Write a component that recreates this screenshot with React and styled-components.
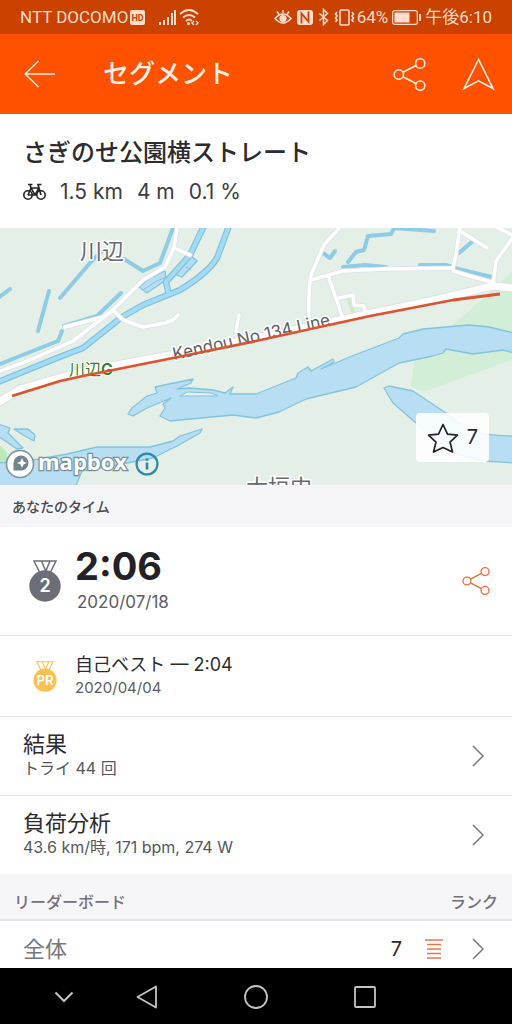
import React from 'react';
import styled, { createGlobalStyle } from 'styled-components';

const GlobalStyle = createGlobalStyle`
    * {
        box-sizing: border-box;
    }

    body {
        margin: 0;
        background: #fff;
        color: #2b2b30;
        font-family: Inter, 'Noto Sans CJK JP', sans-serif;
    }

    button {
        padding: 0;
        border: 0;
        background: none;
        color: inherit;
        font: inherit;
        cursor: pointer;
    }

    h1, h2, p {
        margin: 0;
    }

    svg {
        display: block;
        flex: none;
    }
`;

const Page = styled.div`
    display: flex;
    flex-direction: column;
    min-height: 100vh;
`;

const StatusBar = styled.div`
    display: flex;
    align-items: center;
    justify-content: space-between;
    height: 34px;
    padding: 0 20px;
    background: #ca4100;
    color: #ffdccb;
    font-family: Roboto, 'Noto Sans CJK JP', sans-serif;
    font-size: 17px;
    line-height: 24px;
    white-space: nowrap;
`;

const StatusGroup = styled.div`
    display: flex;
    align-items: center;
    gap: ${props => props.$gap}px;
`;

const AppBar = styled.header`
    display: flex;
    align-items: center;
    height: 80px;
    padding: 0 17px 0 24px;
    background: #ff5100;
    color: #fff0e6;
`;

const AppTitle = styled.h1`
    flex: 1;
    padding-left: 47px;
    font-size: 26px;
    line-height: 36px;
    font-weight: 500;
`;

const AppActions = styled.div`
    display: flex;
    align-items: center;
    gap: 36px;
`;

const SegmentHeader = styled.section`
    display: flex;
    flex-direction: column;
    gap: 4px;
    height: 114px;
    padding: 20px 23px 0;
`;

const SegmentName = styled.h2`
    font-size: 24px;
    line-height: 38px;
    font-weight: 500;
`;

const Stats = styled.div`
    display: flex;
    align-items: center;
    gap: 14px;
    font-size: 21px;
    line-height: 32px;
    color: #3c3c41;
`;

const MapArea = styled.section`
    position: relative;
    height: 257px;
    overflow: hidden;
    background: #e4efe7;
`;

const Attribution = styled.div`
    position: absolute;
    left: 5px;
    bottom: 6px;
    display: flex;
    align-items: center;
    gap: 4px;
`;

const StarButton = styled.button`
    position: absolute;
    right: 23px;
    bottom: 23px;
    display: flex;
    align-items: center;
    gap: 8px;
    height: 49px;
    padding: 0 11px;
    border-radius: 4px;
    background: rgba(255, 255, 255, 0.88);

    span {
        font-size: 20px;
        line-height: 28px;
        padding-bottom: 2px;
    }
`;

const SectionBar = styled.div`
    display: flex;
    align-items: center;
    justify-content: space-between;
    height: ${props => (props.$ruled ? 47 : 42)}px;
    padding: ${props => (props.$ruled ? '8px 14px 0' : '0 12px')};
    border-bottom: ${props => (props.$ruled ? '2px solid #e4e4e6' : '0')};
    background: #f6f6f9;
    color: ${props => (props.$ruled ? '#717177' : '#48484d')};
    font-size: ${props => (props.$ruled ? 16 : 14)}px;
    font-weight: 500;
`;

const Effort = styled.section`
    display: flex;
    align-items: center;
    height: ${props => props.$height}px;
    padding: 0 22px 0 29px;
    border-bottom: 1px solid #e6e6e8;
`;

const MedalSlot = styled.div`
    display: flex;
    justify-content: center;
    width: 32px;
`;

const EffortText = styled.div`
    flex: 1;
    padding-left: 14px;
`;

const EffortTime = styled.p`
    padding-bottom: 2px;
    font-size: 38px;
    line-height: 46px;
    font-weight: 700;
    color: #222226;
`;

const BestTime = styled.p`
    font-size: 18px;
    line-height: 24px;
`;

const DateText = styled.p`
    padding-left: ${props => (props.$large ? 2 : 0)}px;
    padding-bottom: ${props => (props.$large ? 6 : 0)}px;
    font-size: ${props => (props.$large ? 17 : 15)}px;
    line-height: 22px;
    color: #5c5c62;
`;

const ShareButton = styled.button`
    && {
        color: #ef6a35;
    }
`;

const LinkRow = styled.a`
    display: flex;
    align-items: center;
    justify-content: space-between;
    height: ${props => props.$height}px;
    padding: 0 28px 0 23px;
    border-bottom: ${props => (props.$last ? '0' : '1px solid #e6e6e8')};
    color: inherit;
    text-decoration: none;
`;

const RowText = styled.div`
    padding-bottom: 3px;
`;

const RowTitle = styled.p`
    font-size: 22px;
    line-height: 26px;
    color: ${props => (props.$muted ? '#77777c' : '#2b2b30')};
`;

const RowDetail = styled.p`
    font-size: 16px;
    line-height: 22px;
    color: #56565b;
`;

const Rank = styled.div`
    display: flex;
    align-items: center;
    font-size: 20px;

    svg {
        margin-left: 23px;
    }

    svg + svg {
        margin-left: 29px;
    }
`;

const Leaderboard = styled.section`
    padding-top: 8px;
    height: 47px;
    overflow: hidden;
`;

const NavBar = styled.nav`
    display: grid;
    grid-template-columns: 128px 38px 1fr 38px 128px;
    align-items: center;
    justify-items: center;
    flex: 1;
    min-height: 57px;
    background: #000;
    color: #c4c4c4;
`;

const ShareIcon = ({ size }) => (
    <svg width={size} height={size} viewBox="0 0 34 34" fill="none" stroke="currentColor" strokeWidth="1.6">
        <circle cx="6" cy="17" r="4.8" />
        <circle cx="28" cy="5.6" r="4.8" />
        <circle cx="28" cy="28.4" r="4.8" />
        <path d="M10.2 14.7l13.5-7M10.2 19.3l13.5 7" />
    </svg>
);

const Chevron = () => (
    <svg width="12" height="22" viewBox="0 0 12 22" fill="none" stroke="#77777c" strokeWidth="1.5">
        <path d="M1 1l10 10L1 21" />
    </svg>
);

const BikeIcon = () => (
    <svg width="23" height="18" viewBox="0 0 23 18" fill="none" stroke="#222226" strokeWidth="1.6">
        <circle cx="5" cy="12" r="4.2" />
        <circle cx="18" cy="12" r="4.2" />
        <path d="M5 12L8 5h8M8 5l4 7H5M12 12l4-7M18 12L15 1.5h3.5M5 1.5h4.500M7 1.5L8 5" />
    </svg>
);

const Medal = ({ width, color, label }) => (
    <MedalSlot>
        <svg width={width} height={Math.round(width * 1.31)} viewBox="0 0 32 42">
            <path d="M5 1h22l-6.500 13h-9z" fill="#fff" stroke={color} strokeWidth="1.5" />
            <path d="M12.500 1l5 12M21 1l-5 12" fill="none" stroke={color} strokeWidth="1.5" />
            <circle cx="16" cy="26" r="15.700" fill={color} />
            <text x="16" y="32" fill="#fff" fontSize="18" fontWeight="600" textAnchor="middle">{label}</text>
        </svg>
    </MedalSlot>
);

const StatusIcons = () => (
    <svg width="82" height="18" viewBox="0 0 82 18" fill="none" stroke="currentColor" strokeWidth="1.6">
        <path d="M1 10.500q8-9 16 0q-8 9-16 0zM3 3.500l2 3M9 2v3M15 3.500l-2 3" />
        <circle cx="9" cy="10.500" r="2.800" fill="currentColor" />
        <rect x="23" y="2" width="16" height="15" rx="3" fill="currentColor" stroke="none" />
        <path d="M27.500 15.500V5.500l7 8V3.500" stroke="#ca4100" strokeWidth="1.8" />
        <path d="M45.500 5.500l8 7-4 4V1.500l4 4-8 7" strokeWidth="1.5" />
        <rect x="66" y="2" width="9" height="15" rx="1" />
        <path d="M63 4l-1.500 2 1.500 2-1.500 2 1.500 2-1.500 2M78 4l1.500 2-1.500 2 1.500 2-1.500 2 1.500 2" />
    </svg>
);

const SignalIcons = () => (
    <svg width="41" height="18" viewBox="0 0 41 18" fill="none" stroke="currentColor" strokeWidth="2">
        <path d="M2 17v-3M6 17v-5M10 17V9M14 17V5M17 17V2" />
        <path d="M22 6q9-8 18 0M25 9.500q6-5 12 0M28 13q3-3 6 0" strokeWidth="1.8" />
        <circle cx="30.500" cy="15.500" r="1.5" fill="currentColor" stroke="none" />
        <path d="M36 13l-2 2 2 2M38 13l2 2-2 2" strokeWidth="1.4" />
    </svg>
);

const WATERWAYS = [
    'M173 0L160 35L143 43L124 31',
    'M102 23L90 35L60 70',
    'M49 63L38 103',
    'M-2 70L10 61',
    'M121 65L97 88L64 98',
    'M62 103L58 113L20 128L-2 137',
    'M323 25L330 30L335 23',
    'M348 34L356 24L364 22L368 8L391 6L394 0L434 3',
    'M343 39L365 37L386 39',
    'M420 37L446 37L458 41L492 49',
    'M473 13L459 25',
];

const CANALS = [
    'M229 -2L217 30Q208 45 180 62L143 77L122 89L83 120L57 130L-2 154',
    'M204 -2L190 27L166 54L168 63',
];

const ROADS = [
    'M177 0L174 20L165 39L143 52L113 82L73 113L30 132L-2 144',
    'M174 20L190 27',
    'M113 82L123 92L143 99L165 95L173 92L178 87',
    'M65 99L103 89',
    'M239 87L236 103',
    'M341 -2L324 17L311 47Q308 62 309 94',
    'M311 52L343 43L386 41L453 40L456 27L460 -2',
    'M328 47L342 88',
    'M339 70L353 67L354 77L364 78L365 84',
    'M453 43L494 55',
    'M514 8L496 33L493 56',
    'M494 -2L514 8',
    'M460 3L487 20',
];

const LAKES = [
    'M139 59L150 50L165 43L166 52L147 65Z',
    'M190 27L197 33L182 49L174 46Z',
    'M133 188L128 186L132 180L147 168L157 165L155 159L193 151L191 155L177 161L190 160L213 162L225 165L233 159L230 166L256 166L296 150L298 145L308 139L311 143L333 131L334 134L321 141L352 128L399 110L403 106L423 101L469 97L489 99L514 105V125L503 122L473 126L446 121L443 125L433 128L399 135L356 159L306 171L279 184L256 190L233 187L170 193L160 188L165 180L163 176L171 170L147 180Z',
    'M202 201L200 205L177 218L153 230L127 235L82 243L75 260H-2V235L33 232L67 226L97 219L150 219L173 213L180 208Z',
    'M-2 196L10 200L8 205L23 220L17 221L-2 208Z',
    'M14 201L28 201L35 207L34 213L23 207Z',
    'M384 160L389 158L413 163L443 183L463 198Q478 208 514 208V235L486 233L456 226L416 195L393 175Z',
];

const MAIN_ROAD = 'M514 60L493 58L430 73L330 94L256 110L170 127L80 144L20 161L-4 176';
const ROUTE = 'M12 168L60 153L83 148L173 130L256 113L370 88L453 72L500 66';

const SegmentMap = () => (
    <svg width="100%" height="257" viewBox="0 0 512 257" preserveAspectRatio="xMidYMid slice" fill="none" strokeLinejoin="round" strokeLinecap="round">
        <path d="M514 42L469 83L415 128L411 158L423 164L514 131Z" fill="#d3eed6" />
        <path d="M-2 215L7 225V240H-2Z" fill="#bfe8b8" />
        <path d="M348 70L353 83" stroke="#cdebc8" strokeWidth="4" />
        {LAKES.map(d => <path key={d} d={d} fill="#b7def2" stroke="#84c3dc" strokeWidth="1.3" />)}
        <path d="M188 164L211 165L218 168H180Z" fill="#e4efe7" stroke="#84c3dc" />
        {WATERWAYS.map(d => <path key={d} d={d} stroke="#8ecbe5" strokeWidth="4" />)}
        {CANALS.map(d => <path key={d} d={d} stroke="#83c3de" strokeWidth="6.5" />)}
        {CANALS.map(d => <path key={d} d={d} stroke="#a4dbf4" strokeWidth="4" />)}
        <path d="M143 62L155 54L166 49M186 39L191 42" stroke="#84c3dc" />
        {ROADS.map(d => <path key={d} d={d} stroke="#dde1ea" strokeWidth="5" />)}
        <path d={MAIN_ROAD} stroke="#dde1ea" strokeWidth="9" />
        {ROADS.map(d => <path key={d} d={d} stroke="#fff" strokeWidth="3.5" />)}
        <path d={MAIN_ROAD} stroke="#fff" strokeWidth="7" />
        <g stroke="#fff" strokeWidth="3" paintOrder="stroke" fill="#69696d">
            <text x="80" y="31" fontSize="22">川辺</text>
            <text x="246" y="267" fontSize="22">大垣内</text>
            <text x="69" y="147" fontSize="16" fill="#357f25" strokeWidth="2">川辺<tspan fontWeight="600">G</tspan></text>
            <text transform="translate(174 132) rotate(-12.500)" fontSize="17" fill="#5d5d62">Kendou No 134 Line</text>
        </g>
        <path d={ROUTE} stroke="#dd5230" strokeWidth="2.8" strokeLinecap="butt" />
    </svg>
);

const App = () => (
    <Page>
        <GlobalStyle />
        <StatusBar>
            <StatusGroup $gap={13}>
                <StatusGroup $gap={2}>
                    <span>NTT DOCOMO</span>
                    <svg width="15" height="15" viewBox="0 0 15 15">
                        <rect width="15" height="15" rx="2" fill="currentColor" />
                        <text x="7.500" y="11" fontSize="9" fontWeight="700" textAnchor="middle" fill="#ca4100">HD</text>
                    </svg>
                </StatusGroup>
                <SignalIcons />
            </StatusGroup>
            <StatusGroup $gap={4}>
                <StatusGroup $gap={1}>
                    <StatusIcons />
                    <span>64%</span>
                </StatusGroup>
                <svg width="29" height="15" viewBox="0 0 29 15">
                    <rect x="0.700" y="0.700" width="24.600" height="13.600" rx="2" fill="none" stroke="currentColor" strokeWidth="1.2" />
                    <rect x="2.500" y="2.500" width="15" height="10" fill="currentColor" />
                    <rect x="27" y="4" width="2" height="7" fill="currentColor" />
                </svg>
                <span>午後6:10</span>
            </StatusGroup>
        </StatusBar>
        <AppBar>
            <button aria-label="戻る">
                <svg width="32" height="28" viewBox="0 0 32 28" fill="none" stroke="currentColor" strokeWidth="1.5">
                    <path d="M31 14H1M14.500 1L1 14l13.500 13" />
                </svg>
            </button>
            <AppTitle>セグメント</AppTitle>
            <AppActions>
                <button aria-label="共有"><ShareIcon size={33} /></button>
                <button aria-label="ナビゲーション">
                    <svg width="33" height="34" viewBox="0 0 34 34" fill="none" stroke="currentColor" strokeWidth="1.6">
                        <path d="M17 2l15 30-15-8-15 8z" />
                    </svg>
                </button>
            </AppActions>
        </AppBar>
        <SegmentHeader>
            <SegmentName>さぎのせ公園横ストレート</SegmentName>
            <Stats>
                <BikeIcon />
                <span>1.5 km</span>
                <span>4 m</span>
                <span>0.1 %</span>
            </Stats>
        </SegmentHeader>
        <MapArea>
            <SegmentMap />
            <Attribution>
                <svg width="126" height="30" viewBox="0 0 126 30">
                    <circle cx="15" cy="15" r="13.500" fill="#fff" stroke="#78909a" strokeWidth="1.5" />
                    <path d="M8.500 21.500V14a7.500 7.500 0 1 1 7.500 7.500z" fill="#71858c" />
                    <path d="M17 9l1.500 3.500L22 14l-3.500 1.500L17 19l-1.500-3.500L12 14l3.500-1.500z" fill="#fff" />
                    <text x="33" y="21" fontFamily="Open Sans, sans-serif" fontSize="22" fontWeight="700" fill="#fff" stroke="#78909a" strokeWidth="2.5" paintOrder="stroke">mapbox</text>
                </svg>
                <button aria-label="地図情報">
                    <svg width="24" height="24" viewBox="0 0 26 26" fill="none" stroke="#2b8aa5" strokeWidth="2.4">
                        <circle cx="13" cy="13" r="11.300" />
                        <path d="M13 11.500V19M13 7v2.500" strokeWidth="2.8" />
                    </svg>
                </button>
            </Attribution>
            <StarButton>
                <svg width="32" height="32" viewBox="0 0 32 32" fill="none" stroke="#222226" strokeWidth="1.7" strokeLinejoin="round">
                    <path d="M16 2.500l4.500 9.600 10 1-7.500 7 2.500 9.900-9.500-4.500L6.500 30 9 20.100l-7.500-7 10-1z" />
                </svg>
                <span>7</span>
            </StarButton>
        </MapArea>
        <SectionBar>あなたのタイム</SectionBar>
        <Effort $height={109}>
            <Medal width={32} color="#6d6d78" label="2" />
            <EffortText>
                <EffortTime>2:06</EffortTime>
                <DateText $large>2020/07/18</DateText>
            </EffortText>
            <ShareButton aria-label="共有"><ShareIcon size={28} /></ShareButton>
        </Effort>
        <Effort $height={81}>
            <Medal width={24} color="#fcc04e" label="PR" />
            <EffortText>
                <BestTime>自己ベスト — 2:04</BestTime>
                <DateText>2020/04/04</DateText>
            </EffortText>
        </Effort>
        <LinkRow href="#results" $height={79}>
            <RowText>
                <RowTitle>結果</RowTitle>
                <RowDetail>トライ 44 回</RowDetail>
            </RowText>
            <Chevron />
        </LinkRow>
        <LinkRow href="#analysis" $height={78} $last>
            <RowText>
                <RowTitle>負荷分析</RowTitle>
                <RowDetail>43.6 km/時, 171 bpm, 274 W</RowDetail>
            </RowText>
            <Chevron />
        </LinkRow>
        <SectionBar $ruled>
            <span>リーダーボード</span>
            <span>ランク</span>
        </SectionBar>
        <Leaderboard>
            <LinkRow href="#overall" $height={39} $last>
                <RowTitle $muted>全体</RowTitle>
                <Rank>
                    7
                    <svg width="18" height="20" viewBox="0 0 18 20" stroke="#e8774b" strokeWidth="1.6">
                        <path d="M0 1h18M2 5.500h14M2 10h14M2 14.500h14M2 19h14" />
                    </svg>
                    <Chevron />
                </Rank>
            </LinkRow>
        </Leaderboard>
        <NavBar>
            <button aria-label="閉じる">
                <svg width="20" height="12" viewBox="0 0 20 12" fill="none" stroke="currentColor" strokeWidth="2">
                    <path d="M1.500 1.500L10 10l8.500-8.500" />
                </svg>
            </button>
            <button aria-label="戻る">
                <svg width="22" height="24" viewBox="0 0 22 24" fill="none" stroke="currentColor" strokeWidth="1.8" strokeLinejoin="round">
                    <path d="M20 1.500v21L1.500 12z" />
                </svg>
            </button>
            <button aria-label="ホーム">
                <svg width="24" height="24" viewBox="0 0 24 24" fill="none" stroke="currentColor" strokeWidth="1.8">
                    <circle cx="12" cy="12" r="11" />
                </svg>
            </button>
            <button aria-label="履歴">
                <svg width="22" height="22" viewBox="0 0 22 22" fill="none" stroke="currentColor" strokeWidth="1.8">
                    <rect x="1" y="1" width="20" height="20" rx="1" />
                </svg>
            </button>
        </NavBar>
    </Page>
);

export default App;
